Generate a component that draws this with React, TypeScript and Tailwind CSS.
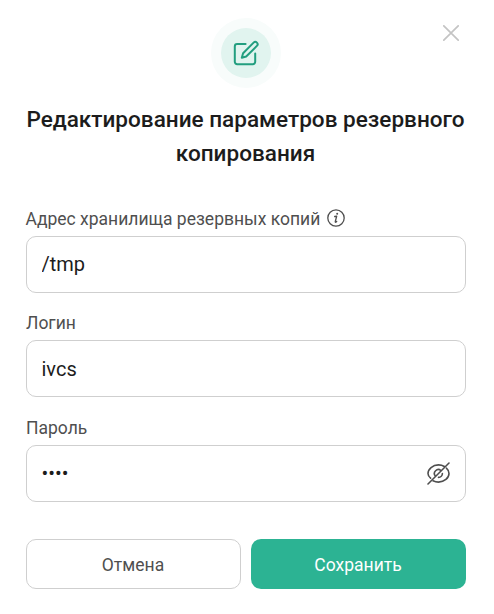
import { useState } from "react";

function EditIcon() {
    return (
        <svg width="26" height="26" viewBox="0 0 26 26" fill="none" stroke="#229e7f" strokeWidth="2" strokeLinecap="round" strokeLinejoin="round">
            <path d="M12.6 4H4.2a2.4 2.4 0 0 0-2.4 2.4v15.4a2.4 2.4 0 0 0 2.4 2.4h15.6a2.4 2.4 0 0 0 2.4-2.4V13.6" />
            <path d="M20.6 2.6a2.3 2.3 0 0 1 3.3 3.3L13.2 16.5 8.8 17.8l1.3-4.6z" />
        </svg>
    )
}

function CloseIcon() {
    return (
        <svg width="16" height="16" viewBox="0 0 16 16" fill="none" stroke="#c4c4c4" strokeWidth="1.7" strokeLinecap="round">
            <path d="M0.8 0.8l14.4 14.4M15.2 0.8L0.8 15.2" />
        </svg>
    )
}

function InfoIcon() {
    return (
        <svg width="18" height="18" viewBox="0 0 18 18" fill="none" stroke="#4f4f4f" strokeLinecap="round" strokeLinejoin="round">
            <circle cx="9" cy="9" r="8.2" strokeWidth="1.3" />
            <path d="M7.7 7.5l2-.4L8.3 12.5q-.2.9.5.7l.9-.7" strokeWidth="1.3" />
            <circle cx="10.2" cy="4.8" r="1" fill="#4f4f4f" stroke="none" />
        </svg>
    )
}

function EyeOffIcon() {
    return (
        <svg width="23" height="23" viewBox="0 0 23 23" fill="none" stroke="#4f4f4f" strokeWidth="1.6" strokeLinecap="round">
            <path d="M3.6 16.2C1.8 14.7 1 13.1 1 11.5 1 7 5.7 2.9 11.5 2.9c2.2 0 4.2.6 5.9 1.6" />
            <path d="M19.4 6.2C21.1 7.7 22 9.6 22 11.5c0 4.5-4.7 8.6-10.5 8.6-2 0-3.9-.5-5.5-1.3" />
            <path d="M8.4 14a3.9 3.9 0 0 1 5.5-5.5M15.4 11.5a3.9 3.9 0 0 1-3.9 3.9" />
            <path d="M1 22L22 1" />
        </svg>
    )
}

export default function App() {

    const [address, setAddress] = useState("/tmp")
    const [login, setLogin] = useState("ivcs")
    const [password, setPassword] = useState("ivcs")
    const [showPassword, setShowPassword] = useState(false)

    return (
        <div className="relative w-[494px] h-[614px] bg-white pl-[26px] pr-7 pt-[18px] font-[Roboto,sans-serif] text-[#4f4f4f]">
            <button className="absolute top-[25px] right-[35px] cursor-pointer" title="Закрыть">
                <CloseIcon />
            </button>

            <div className="w-[70px] h-[70px] mx-auto rounded-full bg-[#f8fcfb] flex justify-center items-center">
                <div className="w-[50px] h-[50px] rounded-full bg-[#e1f4ef] flex justify-center items-center">
                    <EditIcon />
                </div>
            </div>

            <h1 className="mt-[15px] -ml-[9px] -mr-2 text-center text-[22.55px] leading-[34px] font-medium text-[#1c1c1c]">
                Редактирование параметров резервного копирования
            </h1>

            <form className="mt-[33px]" onSubmit={(e) => e.preventDefault()}>
                <div className="h-[104px]">
                    <label className="h-8 pb-0.5 flex items-center gap-[7px] -ml-[0.5px] text-[17.5px]">
                        Адрес хранилища резервных копий
                        <span className="-mt-0.5"><InfoIcon /></span>
                    </label>
                    <input className="w-full h-[57px] px-[14.5px] pb-0.5 rounded-[10px] border border-[#cfcfcf] text-xl text-[#1c1c1c] outline-none" value={address} onChange={(e) => setAddress(e.target.value)} />
                </div>
                <div className="h-[105px]">
                    <label className="h-8 pb-0.5 flex items-center text-[17.5px]">Логин</label>
                    <input className="w-full h-[57px] px-[14.5px] rounded-[10px] border border-[#cfcfcf] text-xl text-[#1c1c1c] outline-none" value={login} onChange={(e) => setLogin(e.target.value)} />
                </div>
                <div>
                    <label className="h-8 pb-0.5 flex items-center text-[17.5px]">Пароль</label>
                    <div className="h-[57px] px-[14.5px] flex items-center rounded-[10px] border border-[#cfcfcf]">
                        <input type={showPassword ? "text" : "password"} className="flex-1 min-w-0 pb-0.5 text-xl text-[#1c1c1c] outline-none" value={password} onChange={(e) => setPassword(e.target.value)} />
                        <button type="button" className="mr-[0.5px] cursor-pointer" onClick={() => setShowPassword(!showPassword)}>
                            <EyeOffIcon />
                        </button>
                    </div>
                </div>
                <div className="mt-[37px] grid grid-cols-2 gap-2.5 text-[17.5px]">
                    <button type="button" className="h-[50px] pt-0.5 pr-px rounded-[10px] border border-[#cfcfcf] cursor-pointer">Отмена</button>
                    <button type="submit" className="h-[50px] pt-0.5 pr-px rounded-[10px] bg-[#2cb393] text-white cursor-pointer">Сохранить</button>
                </div>
            </form>
        </div>
    )
}
